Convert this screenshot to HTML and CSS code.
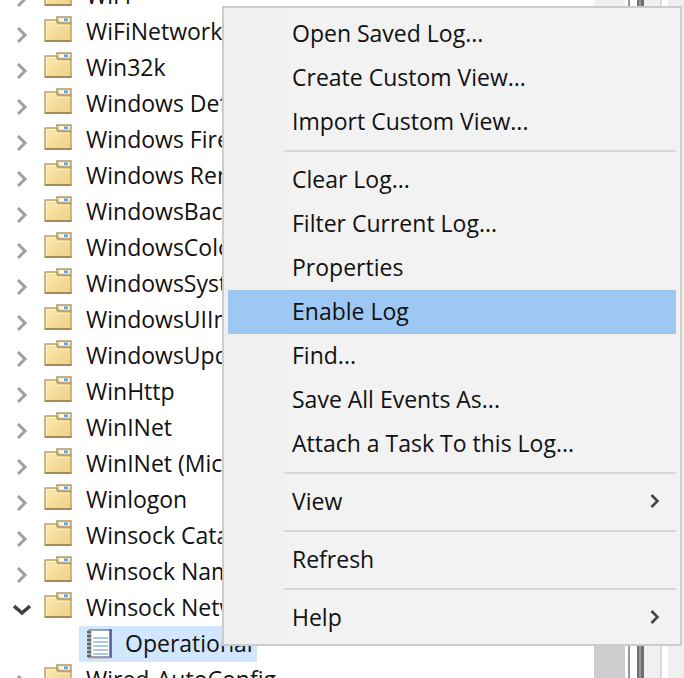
FILE: index.html
```
<!DOCTYPE html>
<html lang="en">
<head>
	<meta charset="UTF-8">
	<meta name="viewport" content="width=device-width, initial-scale=1.0">
	<title>Event Viewer</title>
	<link rel="stylesheet" href="styles.css">
</head>
<body>
	<!-- shared icons -->
	<svg class="defs" aria-hidden="true">
		<defs>
			<linearGradient id="paper" x1="0" y1="0" x2="1" y2="1">
				<stop offset="0" stop-color="#fbe9b2"/>
				<stop offset="1" stop-color="#f0d084"/>
			</linearGradient>
			<symbol id="folder" viewBox="0 0 28 26">
				<path d="M1 4H12L14 8H27V25H1Z" fill="url(#paper)" stroke="#bda265" stroke-width="1.500"/>
				<path d="M13 1H27V7H14.500L13 5Z" fill="#f3e2b0" stroke="#b79c64" stroke-width="1.500"/>
				<path d="M16 2.500H25V5H16Z" fill="#fff"/>
				<path d="M20 2.500H24V5H20Z" fill="#5aa2e0"/>
				<path d="M2.500 23.500V5.500H11L13 9H25.500" fill="none" stroke="#fff2c8"/>
				<path d="M1 25H27.500" stroke="#a58a54" stroke-width="2"/>
			</symbol>
			<symbol id="arrow" viewBox="0 0 12 18">
				<path d="M2 2L9 9L2 16" fill="none" stroke="currentColor" stroke-width="3"/>
			</symbol>
			<symbol id="arrow-down" viewBox="0 0 18 12">
				<path d="M1 2L9 9L17 2" fill="none" stroke="currentColor" stroke-width="3.500"/>
			</symbol>
			<symbol id="arrow-small" viewBox="0 0 10 16">
				<path d="M1.500 2L7.500 8L1.500 14" fill="none" stroke="currentColor" stroke-width="2.500"/>
			</symbol>
			<symbol id="log" viewBox="0 0 28 30">
				<path d="M4 1H26V28H4Z" fill="#fff" stroke="#7882a8" stroke-width="1.500"/>
				<path d="M25.500 0V29" stroke="#5464a4" stroke-width="2.500"/>
				<path d="M3 28.500H25" stroke="#9a9ea4" stroke-width="2"/>
				<path d="M8 9H23M8 13H23M8 17H23M8 21H23M8 25H23" stroke="#8db9d8" stroke-width="1.500"/>
				<path d="M4.500 1V29" stroke="#a4a8ae" stroke-width="4"/>
				<path d="M2 3H6M2 7H6M2 11H6M2 15H6M2 19H6M2 23H6M2 27H6" stroke="#606468" stroke-width="2"/>
			</symbol>
		</defs>
	</svg>

	<main class="window">
		<ul class="tree">
			<li class="node"><button class="toggle" aria-label="Expand"><svg><use href="#arrow"/></svg></button><svg class="folder"><use href="#folder"/></svg><span class="label">WiFi</span></li>
			<li class="node"><button class="toggle" aria-label="Expand"><svg><use href="#arrow"/></svg></button><svg class="folder"><use href="#folder"/></svg><span class="label">WiFiNetwork</span></li>
			<li class="node"><button class="toggle" aria-label="Expand"><svg><use href="#arrow"/></svg></button><svg class="folder"><use href="#folder"/></svg><span class="label">Win32k</span></li>
			<li class="node"><button class="toggle" aria-label="Expand"><svg><use href="#arrow"/></svg></button><svg class="folder"><use href="#folder"/></svg><span class="label">Windows Defender</span></li>
			<li class="node"><button class="toggle" aria-label="Expand"><svg><use href="#arrow"/></svg></button><svg class="folder"><use href="#folder"/></svg><span class="label">Windows Firewall</span></li>
			<li class="node"><button class="toggle" aria-label="Expand"><svg><use href="#arrow"/></svg></button><svg class="folder"><use href="#folder"/></svg><span class="label">Windows Remote</span></li>
			<li class="node"><button class="toggle" aria-label="Expand"><svg><use href="#arrow"/></svg></button><svg class="folder"><use href="#folder"/></svg><span class="label">WindowsBackup</span></li>
			<li class="node"><button class="toggle" aria-label="Expand"><svg><use href="#arrow"/></svg></button><svg class="folder"><use href="#folder"/></svg><span class="label">WindowsColor</span></li>
			<li class="node"><button class="toggle" aria-label="Expand"><svg><use href="#arrow"/></svg></button><svg class="folder"><use href="#folder"/></svg><span class="label">WindowsSystem</span></li>
			<li class="node"><button class="toggle" aria-label="Expand"><svg><use href="#arrow"/></svg></button><svg class="folder"><use href="#folder"/></svg><span class="label">WindowsUIImmersive</span></li>
			<li class="node"><button class="toggle" aria-label="Expand"><svg><use href="#arrow"/></svg></button><svg class="folder"><use href="#folder"/></svg><span class="label">WindowsUpdate</span></li>
			<li class="node"><button class="toggle" aria-label="Expand"><svg><use href="#arrow"/></svg></button><svg class="folder"><use href="#folder"/></svg><span class="label">WinHttp</span></li>
			<li class="node"><button class="toggle" aria-label="Expand"><svg><use href="#arrow"/></svg></button><svg class="folder"><use href="#folder"/></svg><span class="label">WinINet</span></li>
			<li class="node"><button class="toggle" aria-label="Expand"><svg><use href="#arrow"/></svg></button><svg class="folder"><use href="#folder"/></svg><span class="label">WinINet (Microsoft)</span></li>
			<li class="node"><button class="toggle" aria-label="Expand"><svg><use href="#arrow"/></svg></button><svg class="folder"><use href="#folder"/></svg><span class="label">Winlogon</span></li>
			<li class="node"><button class="toggle" aria-label="Expand"><svg><use href="#arrow"/></svg></button><svg class="folder"><use href="#folder"/></svg><span class="label">Winsock Catalog</span></li>
			<li class="node"><button class="toggle" aria-label="Expand"><svg><use href="#arrow"/></svg></button><svg class="folder"><use href="#folder"/></svg><span class="label">Winsock Name</span></li>
			<li class="node"><button class="toggle open" aria-label="Collapse"><svg><use href="#arrow-down"/></svg></button><svg class="folder"><use href="#folder"/></svg><span class="label">Winsock Network</span></li>
			<li class="node leaf"><a href="#" class="selected"><svg class="log"><use href="#log"/></svg><span class="label">Operational</span></a></li>
			<li class="node"><button class="toggle" aria-label="Expand"><svg><use href="#arrow"/></svg></button><svg class="folder"><use href="#folder"/></svg><span class="label">Wired-AutoConfig</span></li>
		</ul>
		<div class="scrollbar"><div class="thumb"></div></div>
		<div class="splitter"></div>
		<div class="pane"></div>
	</main>

	<div class="menu" role="menu">
		<button role="menuitem">Open Saved Log...</button>
		<button role="menuitem">Create Custom View...</button>
		<button role="menuitem">Import Custom View...</button>
		<hr>
		<button role="menuitem">Clear Log...</button>
		<button role="menuitem">Filter Current Log...</button>
		<button role="menuitem">Properties</button>
		<button role="menuitem" class="active">Enable Log</button>
		<button role="menuitem">Find...</button>
		<button role="menuitem">Save All Events As...</button>
		<button role="menuitem">Attach a Task To this Log...</button>
		<hr>
		<button role="menuitem">View<svg><use href="#arrow-small"/></svg></button>
		<hr>
		<button role="menuitem">Refresh</button>
		<hr>
		<button role="menuitem">Help<svg><use href="#arrow-small"/></svg></button>
	</div>
</body>
</html>
```
FILE: styles.css
```
* {
	box-sizing: border-box;
}

body {
	margin: 0;
	background-color: #fff;
	color: #111;
	font-family: "Open Sans", "Noto Sans", sans-serif;
	font-size: 23px;
	overflow: hidden;
}

button {
	font: inherit;
	color: inherit;
	background: none;
	border: none;
	padding: 0;
}

.defs {
	position: absolute;
	width: 0;
	height: 0;
}

.window {
	display: flex;
	height: 100vh;
	overflow: hidden;
}

/* tree is scrolled part way through a row */
.tree {
	flex: 1;
	min-width: 0;
	list-style: none;
	margin: -22px 0 0;
	padding: 0;
}

.node {
	display: flex;
	align-items: center;
	height: 36px;
	white-space: nowrap;
}

.label {
	padding-bottom: 2px;
}

.toggle {
	display: flex;
	justify-content: center;
	width: 44px;
	padding-top: 6px;
	color: #a0a0a0;
}

.toggle svg {
	width: 12px;
	height: 18px;
}

.toggle.open {
	padding-top: 4px;
	color: #404040;
}

.toggle.open svg {
	width: 18px;
	height: 12px;
}

.folder {
	width: 28px;
	height: 26px;
	margin-right: 14px;
	margin-bottom: 6px;
}

.leaf {
	padding-left: 79px;
}

.selected {
	display: flex;
	align-items: center;
	height: 36px;
	padding: 0 4px 0 6px;
	background-color: #d1e7ff;
	color: inherit;
	text-decoration: none;
}

.log {
	width: 28px;
	height: 30px;
	margin-right: 12px;
}

.scrollbar {
	width: 31px;
	background-color: #f0f0f0;
}

.thumb {
	height: 60%;
	margin-top: 300px;
	background-color: #cdcdcd;
}

.splitter {
	width: 20px;
	border-left: 3px solid #fff;
	background: linear-gradient(90deg, #8c97a5 2px, #fff 2px, #fff 9px, #6e6e6e 9px, #6e6e6e 11px, #999 11px, #999 13px, #6e6e6e 13px, #6e6e6e 16px, #f0f0f0 16px);
}

.pane {
	width: 39px;
	background: linear-gradient(90deg, #f0f0f0 15px, #dadada 15px, #dadada 17px, #fff 17px, #fff 23px, #f0f0f0 23px);
}

.menu {
	position: absolute;
	top: 6px;
	left: 222px;
	right: 2px;
	padding: 4px;
	border: 2px solid #ccc;
	background: linear-gradient(90deg, #f0f0f0 60px, #f2f2f2 60px);
}

.menu button {
	display: flex;
	align-items: center;
	justify-content: space-between;
	width: 100%;
	height: 44px;
	padding: 0 16px 2px 64px;
	text-align: left;
	white-space: nowrap;
}

.menu button.active,
.menu button:hover {
	background-color: #9cc8f3;
}

.menu svg {
	width: 10px;
	height: 16px;
	color: #444;
}

.menu hr {
	height: 2px;
	margin: 6px 0 6px 56px;
	border: none;
	background-color: #d7d7d7;
}
```
